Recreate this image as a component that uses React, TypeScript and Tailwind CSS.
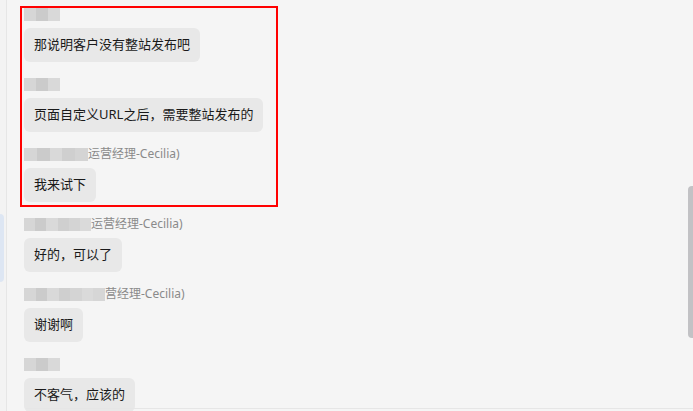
import React from 'react'

type Msg = {
  text: string
  maskWidth: number
  role?: string
}

const messages: Msg[] = [
  { text: '那说明客户没有整站发布吧', maskWidth: 36 },
  { text: '页面自定义URL之后，需要整站发布的', maskWidth: 36 },
  { text: '我来试下', maskWidth: 64, role: '运营经理-Cecilia)' },
  { text: '好的，可以了', maskWidth: 67, role: '运营经理-Cecilia)' },
  { text: '谢谢啊', maskWidth: 81, role: '营经理-Cecilia)' },
  { text: '不客气，应该的', maskWidth: 36 },
]

// blurred name placeholder (mosaic)
function Mask({ width }: { width: number }) {
  const tones = ['bg-[#d6d6d6]', 'bg-[#cbcbcb]', 'bg-[#d9d9d9]', 'bg-[#cfcfcf]', 'bg-[#d4d4d4]', 'bg-[#dadada]']
  const count = Math.max(2, Math.round(width / 12))
  return (
    <div className="flex h-[13px] blur-[0.6px]" style={{ width }}>
      {Array.from({ length: count }).map((_, i) => (
        <div key={i} className={`flex-1 ${tones[i % tones.length]}`} />
      ))}
    </div>
  )
}

export default function App(): React.ReactElement {
  return (
    <div
      className="relative flex h-[411px] w-[693px] overflow-hidden bg-[#f5f5f5]"
      style={{ fontFamily: '"Noto Sans", "Noto Sans CJK SC", sans-serif' }}
    >
      {/* left strip */}
      <div className="relative w-[7px] shrink-0 border-r border-[#e6e6e6] bg-[#f3f3f3]">
        <div className="absolute left-0 top-[214px] h-[68px] w-[4px] rounded-r-sm bg-[#dde6f3]" />
      </div>

      {/* message list */}
      <div className="flex flex-1 flex-col pl-[17px] pt-[5px]">
        {messages.map((m, i) => (
          <div key={i} className="mb-[13px] flex flex-col items-start">
            <div className="mb-[5px] flex h-[18px] items-center">
              <Mask width={m.maskWidth} />
              {m.role && (
                <span className="text-[12px] leading-[18px] text-[#8a8a8a]">{m.role}</span>
              )}
            </div>
            <div className="flex h-[34px] items-center rounded-[6px] bg-[#e8e8e8] px-[10px] text-[13px] text-[#1a1a1a]">
              {m.text}
            </div>
          </div>
        ))}
      </div>

      {/* scrollbar */}
      <div className="absolute right-0 top-[186px] h-[152px] w-[5px] rounded-l-sm bg-[#c2c2c5]" />

      {/* bottom divider */}
      <div className="absolute bottom-[2px] left-[26px] right-0 h-px bg-[#e6e6e6]" />

      {/* red annotation box */}
      <div className="pointer-events-none absolute left-[20px] top-[6px] h-[201px] w-[258px] border-2 border-[#ff0000]" />
    </div>
  )
}
